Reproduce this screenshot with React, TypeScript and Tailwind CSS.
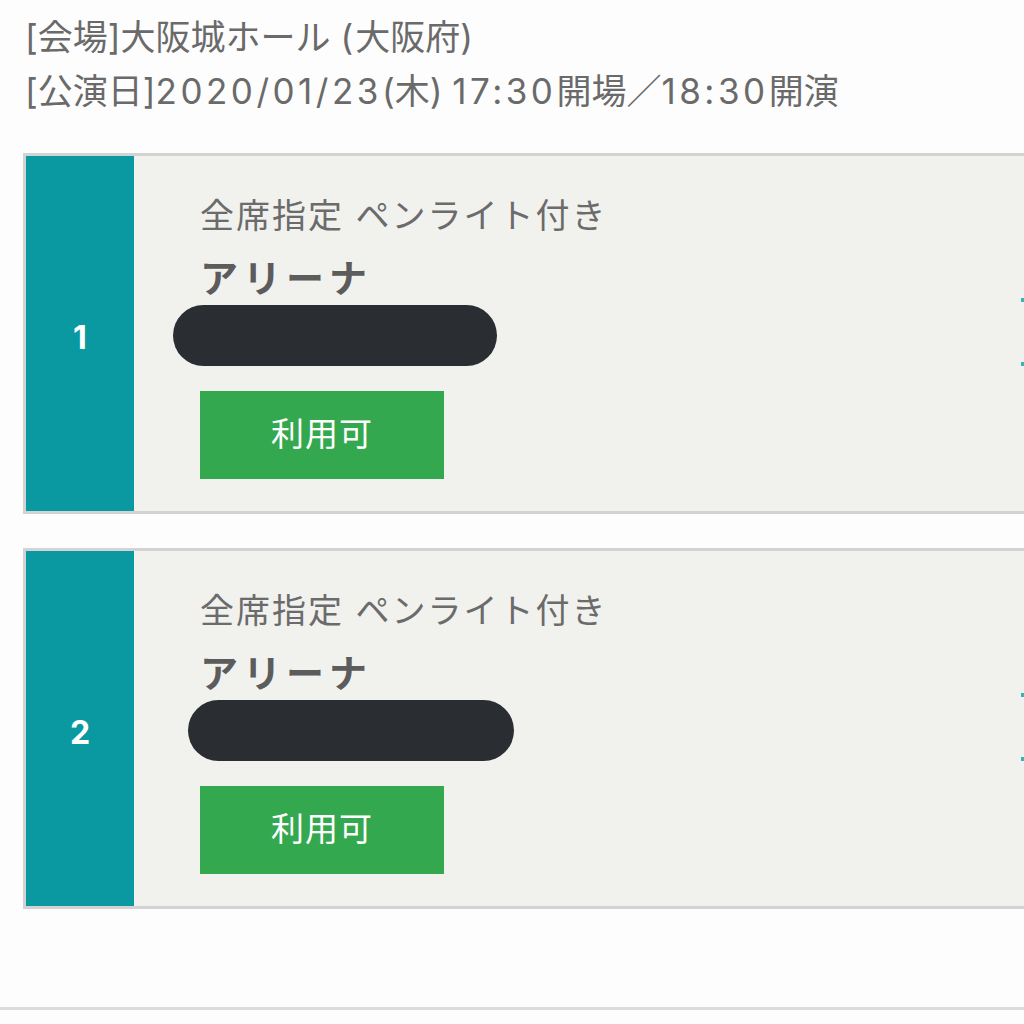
import React from "react";

type Ticket = {
  no: number;
  pillShift: string;
  pillWidth: string;
};

const tickets: Ticket[] = [
  { no: 1, pillShift: "ml-[-27px]", pillWidth: "w-[324px]" },
  { no: 2, pillShift: "ml-[-12px]", pillWidth: "w-[326px]" },
];

const TicketCard: React.FC<{ t: Ticket }> = ({ t }) => {
  return (
    <div className="relative ml-[23px] w-[1020px] h-[361px] border-[3px] border-[#d3d3d3] flex bg-[#f1f1ee]">
      <div className="w-[108px] shrink-0 bg-[#0a99a0] flex items-center justify-center pt-[8px]">
        <span className="text-white text-[32px] font-bold">{t.no}</span>
      </div>
      <div className="flex-1 pl-[66px] pt-[39px]">
        <div className="text-[34px] leading-[42px] text-[#6b6b6b] tracking-[2px]">
          全席指定 ペンライト付き
        </div>
        <div className="mt-[18px] text-[38px] leading-[46px] font-bold text-[#5c5c5c] tracking-[5px]">
          アリーナ
        </div>
        <div
          className={`${t.pillShift} ${t.pillWidth} mt-[4px] h-[61px] rounded-full bg-[#2a2d31]`}
        />
        <div className="mt-[25px] w-[244px] h-[88px] bg-[#34a84e] flex items-center justify-center">
          <span className="text-white text-[33px] tracking-[1px]">利用可</span>
        </div>
      </div>
      <div className="absolute left-[995px] top-[142px] w-[4px] h-[4px] bg-[#3fb0b8]" />
      <div className="absolute left-[995px] top-[206px] w-[4px] h-[4px] bg-[#3fb0b8]" />
    </div>
  );
};

const App: React.FC = () => {
  return (
    <div
      className="w-[1024px] h-[1024px] bg-[#fdfdfd] overflow-hidden"
      style={{ fontFamily: 'Inter, "Noto Sans CJK JP", "Noto Sans", sans-serif' }}
    >
      <div className="pt-[10px] pl-[25px] text-[35px] leading-[54px] text-[#6a6a6a] whitespace-nowrap">
        <div>
          [会場]大阪城ホール <span className="tracking-[2px]">(</span>大阪府)
        </div>
        <div>
          [公演日]<span className="tracking-[3.5px]">2020/01/23</span>(木){" "}
          <span className="tracking-[3.5px]">17:30</span>開場／
          <span className="tracking-[3.5px]">18:30</span>開演
        </div>
      </div>
      <div className="mt-[35px] flex flex-col gap-[34px]">
        {tickets.map((t) => (
          <TicketCard key={t.no} t={t} />
        ))}
      </div>
      <div className="mt-[98px] h-[3px] bg-[#dcdcdc]" />
    </div>
  );
};

export default App;
